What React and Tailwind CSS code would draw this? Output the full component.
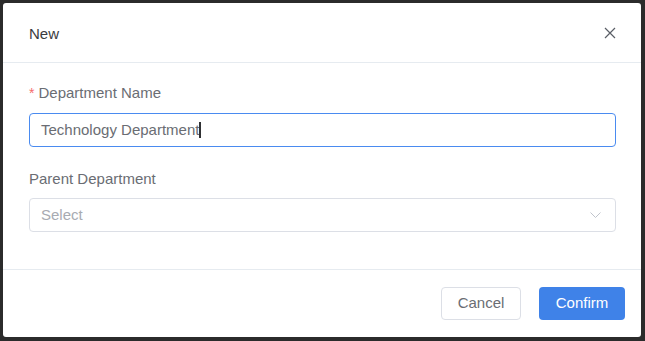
export default function App() {
  return (
    <div className="w-[645px] h-[341px] bg-[#2b2b2b] pl-[3px] pt-[3px] font-['Liberation_Sans',Arial,sans-serif]">
      <div className="w-[638px] h-[334px] bg-white rounded-[3px] flex flex-col">
        <div className="h-[59px] flex items-center justify-between pl-[26px] pr-[25px] border-b border-[#e6ebf0] box-content">
          <span className="text-[15px] text-[#3a3c40] pt-[3px]">New</span>
          <svg width="12" height="12" viewBox="0 0 12 12" className="text-[#5a5e66]">
            <path d="M1 1 L11 11 M11 1 L1 11" stroke="currentColor" strokeWidth="1.2" fill="none" />
          </svg>
        </div>
        <div className="flex-1 flex flex-col pt-[20px] pl-[26px] pr-[25px]">
          <div className="h-[20px] flex items-center text-[15px] text-[#6a6d73]">
            <span className="text-[#f56c6c] mr-[4px] text-[14px]">*</span>
            <span>Department Name</span>
          </div>
          <div className="mt-[10px] h-[34px] border border-[#4a8bf0] rounded-[4px] flex items-center pl-[11px]">
            <span className="text-[15px] text-[#6a6d73]">Technology Department</span>
            <span className="w-[2px] h-[16px] bg-[#303133]"></span>
          </div>
          <div className="mt-[22px] h-[20px] flex items-center text-[15px] text-[#6a6d73]">
            Parent Department
          </div>
          <div className="mt-[9px] h-[34px] border border-[#dcdfe6] rounded-[4px] flex items-center justify-between pl-[11px] pr-[14px]">
            <span className="text-[15px] text-[#a8abb2]">Select</span>
            <svg width="11" height="6" viewBox="0 0 11 6">
              <path d="M0.5 0.5 L5.5 5.5 L10.5 0.5" stroke="#c0c4cc" strokeWidth="1" fill="none" />
            </svg>
          </div>
        </div>
        <div className="h-[68px] border-t border-[#e6ebf0] flex items-center justify-end gap-[18px] pr-[16px]">
          <div className="w-[80px] h-[33px] border border-[#dcdfe6] rounded-[4px] flex items-center justify-center text-[15px] text-[#6a6d73]">
            Cancel
          </div>
          <div className="w-[86px] h-[33px] bg-[#3f82e8] rounded-[4px] flex items-center justify-center text-[15px] text-white">
            Confirm
          </div>
        </div>
      </div>
    </div>
  );
}
